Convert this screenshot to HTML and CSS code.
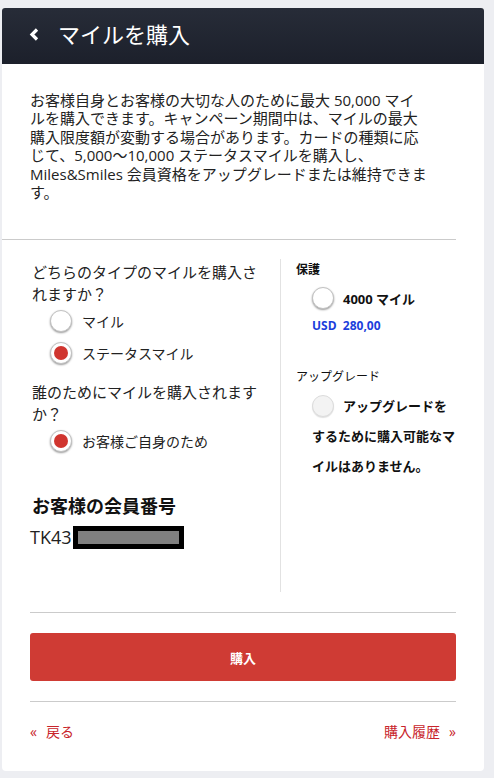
FILE: index.html
```html
<!DOCTYPE html>
<html lang="ja">
<head>
    <meta charset="UTF-8">
    <meta name="viewport" content="width=device-width, initial-scale=1.0">
    <title>マイルを購入</title>
    <link rel="stylesheet" href="styles.css">
</head>
<body>
    <div class="card">
        <div class="header">
            <svg class="back-icon" width="11" height="13" viewBox="0 0 11 13">
                <polyline points="8,1.5 3,6.5 8,11.5" fill="none" stroke="#fff" stroke-width="3.2"/>
            </svg>
            <h1>マイルを購入</h1>
        </div>

        <div class="content">
            <p class="intro">お客様自身とお客様の大切な人のために最大 50,000 マイ<br>ルを購入できます。キャンペーン期間中は、マイルの最大<br>購入限度額が変動する場合があります。カードの種類に応<br>じて、5,000～10,000 ステータスマイルを購入し、<br>Miles&amp;Smiles 会員資格をアップグレードまたは維持できま<br>す。</p>

            <hr class="divider wide">

            <div class="columns">
                <div class="col-left">
                    <p class="question">どちらのタイプのマイルを購入されますか？</p>
                    <div class="radio-row">
                        <span class="radio"></span>
                        <span class="radio-label">マイル</span>
                    </div>
                    <div class="radio-row">
                        <span class="radio checked"></span>
                        <span class="radio-label">ステータスマイル</span>
                    </div>

                    <p class="question second">誰のためにマイルを購入されますか？</p>
                    <div class="radio-row">
                        <span class="radio checked"></span>
                        <span class="radio-label">お客様ご自身のため</span>
                    </div>

                    <h2 class="member-title">お客様の会員番号</h2>
                    <div class="member-no">TK43<span class="masked"></span></div>
                </div>

                <div class="col-right">
                    <div class="side-title bold">保護</div>
                    <div class="option-row">
                        <span class="radio"></span>
                        <span class="option-label">4000 マイル</span>
                    </div>
                    <div class="price">USD&nbsp; 280,00</div>

                    <div class="side-title upgrade">アップグレード</div>
                    <div class="upgrade-note"><span class="radio disabled"></span>アップグレードをするために購入可能なマイルはありません。</div>
                </div>
            </div>

            <hr class="divider">
            <button class="buy-btn" type="button">購入</button>
            <hr class="divider">

            <div class="links">
                <a href="#" class="link"><span class="arrow">«</span>戻る</a>
                <a href="#" class="link">購入履歴<span class="arrow right">»</span></a>
            </div>
        </div>
    </div>
</body>
</html>
```

FILE: styles.css
```css
body {
    margin: 0;
    padding: 8px 10px 7px 2px;
    background-color: #edeef2;
    font-family: "Open Sans", "Noto Sans CJK JP", sans-serif;
    color: #222;
}
.card {
    background: white;
    border-radius: 3px 3px 4px 4px;
    overflow: hidden;
}
.header {
    height: 56px;
    display: flex;
    align-items: center;
    padding-left: 27px;
    padding-bottom: 4px;
    box-sizing: border-box;
    background: linear-gradient(#272c38, #1c202b);
}
.back-icon {
    display: block;
}
.header h1 {
    margin: 0 0 0 18px;
    font-size: 22px;
    font-weight: normal;
    color: white;
    line-height: 28px;
}
.content {
    padding: 0 28px 29px;
}
.intro {
    margin: 27px 0 0;
    font-size: 15px;
    line-height: 18.4px;
    color: #222;
}
.divider {
    border: none;
    border-top: 1px solid #cbcbcb;
    margin: 20px 0 0;
}
.divider.wide {
    margin: 38px 0 0 -28px;
}
.columns {
    display: grid;
    grid-template-columns: 251px 1fr;
    margin-top: 19px;
}
.col-left {
    padding: 2px 14px 43px 2px;
    border-right: 1px solid #e2e2e2;
}
.question {
    margin: 0;
    font-size: 15px;
    line-height: 22px;
}
.question.second {
    margin-top: 12px;
}
.radio-row {
    display: flex;
    align-items: center;
    height: 32px;
    padding-left: 18px;
}
.radio {
    display: inline-block;
    position: relative;
    width: 22px;
    height: 22px;
    box-sizing: border-box;
    border-radius: 50%;
    border: 1px solid #c2c2c2;
    background: white;
    box-shadow: 0 1px 2px rgba(0,0,0,0.4);
    flex-shrink: 0;
}
.radio.checked::after {
    content: "";
    position: absolute;
    left: 3px;
    top: 3px;
    width: 14px;
    height: 14px;
    border-radius: 50%;
    background: #d0352f;
}
.radio.disabled {
    background: #f3f3f3;
    border-color: #dcdcdc;
    box-shadow: 0 1px 1px rgba(0,0,0,0.12);
}
.radio-label {
    margin-left: 10px;
    font-size: 14px;
}
.member-title {
    margin: 37px 0 0;
    font-size: 18px;
    line-height: 24px;
    font-weight: bold;
    color: #111;
}
.member-no {
    margin-top: 7px;
    font-size: 18px;
    line-height: 24px;
    display: flex;
    align-items: center;
    margin-left: -2px;
}
.masked {
    display: inline-block;
    width: 111px;
    height: 23px;
    box-sizing: border-box;
    border: 5px solid #000;
    background: #808080;
    margin-left: 1px;
}
.col-right {
    padding: 2px 0 0 15px;
}
.side-title {
    font-size: 12px;
    line-height: 18px;
    color: #111;
}
.side-title.bold {
    font-weight: bold;
}
.side-title.upgrade {
    margin-top: 33px;
}
.option-row {
    display: flex;
    align-items: center;
    margin-top: 8px;
    padding-left: 16px;
}
.option-label {
    margin-left: 9px;
    font-size: 13px;
    font-weight: bold;
    color: #111;
}
.price {
    margin-top: 8px;
    padding-left: 16px;
    font-size: 12px;
    line-height: 18px;
    font-weight: bold;
    color: #1c3fdc;
}
.upgrade-note {
    margin-top: 5px;
    padding-left: 16px;
    font-size: 13px;
    line-height: 30px;
    font-weight: bold;
    color: #111;
}
.upgrade-note .radio {
    vertical-align: middle;
    margin: -3px 9px 0 0;
}
.buy-btn {
    display: block;
    width: 100%;
    height: 48px;
    margin-top: 20px;
    border: none;
    border-radius: 3px;
    background-color: #cf3b34;
    color: white;
    font-family: inherit;
    font-size: 13px;
    font-weight: bold;
    cursor: pointer;
}
.links {
    display: flex;
    justify-content: space-between;
    margin-top: 20px;
    line-height: 20px;
}
.link {
    color: #c8242b;
    font-size: 14px;
    text-decoration: none;
}
.arrow {
    margin-right: 9px;
}
.arrow.right {
    margin: 0 0 0 9px;
}
```
